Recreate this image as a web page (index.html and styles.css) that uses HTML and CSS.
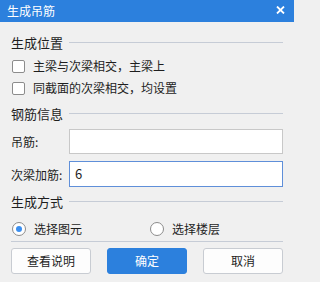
FILE: index.html
```html
<!DOCTYPE html>
<html lang="zh">
<head>
<meta charset="utf-8">
<link rel="stylesheet" href="styles.css">
</head>
<body>
<div class="dialog">
  <div class="titlebar">
    <span class="title">生成吊筋</span>
    <svg class="close" width="9" height="8" viewBox="0 0 9 8"><path d="M1 0.5 L8 7.5 M8 0.5 L1 7.5" stroke="#fff" stroke-width="1.8"/></svg>
  </div>
  <div class="content">
    <div class="group-head g1"><span>生成位置</span><i class="rule"></i></div>
    <label class="check-row first"><span class="checkbox"></span><span>主梁与次梁相交，主梁上</span></label>
    <label class="check-row"><span class="checkbox"></span><span>同截面的次梁相交，均设置</span></label>

    <div class="group-head g2"><span>钢筋信息</span><i class="rule"></i></div>
    <div class="field f1"><span class="lbl">吊筋:</span><div class="input"></div></div>
    <div class="field f2"><span class="lbl">次梁加筋:</span><div class="input focus">6</div></div>

    <div class="group-head g3"><span>生成方式</span><i class="rule"></i></div>
    <div class="radios">
      <label class="radio-row"><span class="radio on"></span><span>选择图元</span></label>
      <label class="radio-row"><span class="radio"></span><span>选择楼层</span></label>
    </div>
    <div class="sep"></div>
    <div class="buttons">
      <div class="btn">查看说明</div>
      <div class="btn primary">确定</div>
      <div class="btn">取消</div>
    </div>
  </div>
</div>
</body>
</html>
```

FILE: styles.css
```css
html, body {
  margin: 0;
  padding: 0;
  background: #f0f0f0;
}
body {
  font-family: "Noto Sans CJK SC", "Noto Sans", sans-serif;
  font-size: 12px;
  color: #1e1e1e;
  width: 294px;
  height: 282px;
  overflow: hidden;
}
.titlebar {
  height: 22px;
  background: #2c80dd;
  display: flex;
  align-items: center;
  justify-content: space-between;
  padding: 0 9px 0 7px;
  color: #fff;
}
.title {
  font-size: 12px;
  line-height: 22px;
}
.close {
  margin-top: -2px;
}
.content {
  padding: 0 11px;
}
.group-head {
  display: flex;
  align-items: center;
  height: 16px;
  font-size: 13px;
  line-height: 16px;
}
.group-head .rule {
  flex: 1;
  height: 1px;
  background: #c6ccd6;
  margin-left: 6px;
  margin-top: -1px;
}
.group-head.g1 { margin-top: 13px; }
.group-head.g2 { margin-top: 7px; }
.group-head.g3 { margin-top: 7px; }

.check-row {
  display: flex;
  align-items: center;
  height: 22px;
  line-height: 22px;
}
.check-row.first { margin-top: 4px; }
.checkbox {
  width: 11px;
  height: 11px;
  border: 1px solid #8c8c8c;
  border-radius: 2px;
  background: #fff;
  margin: 0 8px 0 1px;
}
.field {
  display: flex;
  align-items: center;
}
.field.f1 { margin-top: 7px; }
.field.f2 { margin-top: 7px; }
.lbl {
  width: 58px;
}
.input {
  flex: 1;
  height: 23px;
  border: 1px solid #c8c8c8;
  background: #fff;
  line-height: 23px;
  padding-left: 5px;
  font-size: 13px;
}
.input.focus {
  height: 24px;
  line-height: 24px;
  border-color: #5f8fd9;
}
.radios {
  display: grid;
  grid-template-columns: 138px 1fr;
  margin-top: 10px;
  height: 14px;
  align-items: center;
}
.radio-row {
  display: flex;
  align-items: center;
}
.radio {
  box-sizing: border-box;
  width: 14px;
  height: 14px;
  border: 1px solid #8c8c8c;
  border-radius: 50%;
  background: #fff;
  margin: 0 8px 0 1px;
  display: flex;
  align-items: center;
  justify-content: center;
}
.radio.on::after {
  content: "";
  width: 6px;
  height: 6px;
  border-radius: 50%;
  background: #3b8ff0;
}
.sep {
  height: 1px;
  background: #c6ccd6;
  margin-top: 7px;
}
.buttons {
  display: flex;
  justify-content: space-between;
  margin-top: 6px;
}
.btn {
  box-sizing: border-box;
  width: 80px;
  height: 26px;
  border: 1px solid #c8ccd2;
  border-radius: 3px;
  background: #fdfdfd;
  text-align: center;
  line-height: 24px;
}
.btn.primary {
  background: #2c80dd;
  border-color: #2c80dd;
  color: #fff;
}
```
